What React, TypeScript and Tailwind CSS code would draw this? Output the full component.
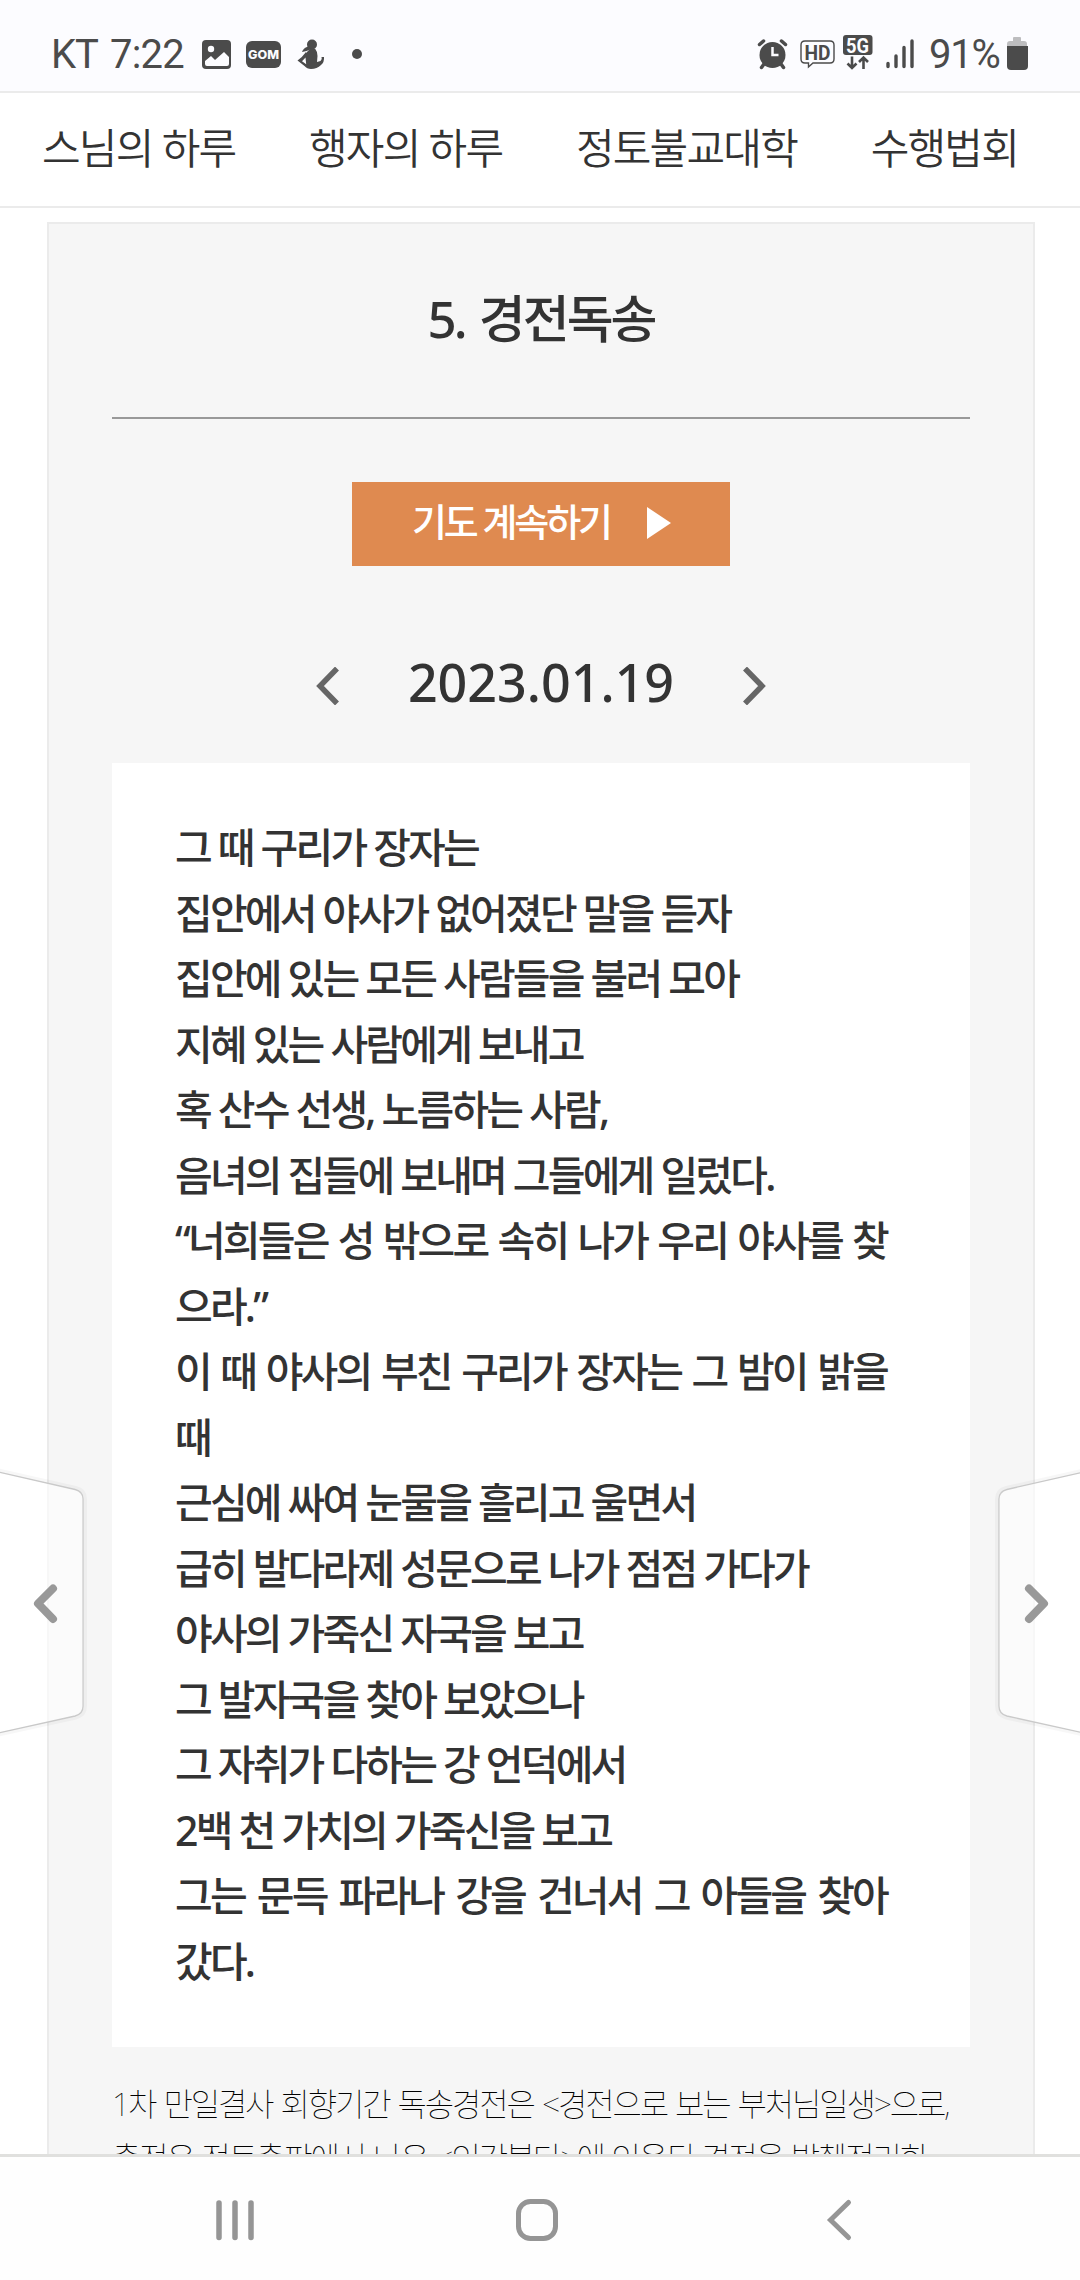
import React from 'react';

const menu = ['스님의 하루', '행자의 하루', '정토불교대학', '수행법회'];

const verses = [
  { text: '그 때 구리가 장자는' },
  { text: '집안에서 야사가 없어졌단 말을 듣자' },
  { text: '집안에 있는 모든 사람들을 불러 모아' },
  { text: '지혜 있는 사람에게 보내고' },
  { text: '혹 산수 선생, 노름하는 사람,' },
  { text: '음녀의 집들에 보내며 그들에게 일렀다.' },
  { text: '“너희들은 성 밖으로 속히 나가 우리 야사를 찾', wrapped: true },
  { text: '으라.”' },
  { text: '이 때 야사의 부친 구리가 장자는 그 밤이 밝을', wrapped: true },
  { text: '때' },
  { text: '근심에 싸여 눈물을 흘리고 울면서' },
  { text: '급히 발다라제 성문으로 나가 점점 가다가' },
  { text: '야사의 가죽신 자국을 보고' },
  { text: '그 발자국을 찾아 보았으나' },
  { text: '그 자취가 다하는 강 언덕에서' },
  { text: '2백 천 가치의 가죽신을 보고' },
  { text: '그는 문득 파라나 강을 건너서 그 아들을 찾아', wrapped: true },
  { text: '갔다.' },
];

const LeftIcons = () => (
  <svg className="h-[91px] w-[180px]" viewBox="195 0 180 91" fill="#4b4b4b">
    <rect x="202" y="40" width="29" height="29" rx="4" />
    <circle cx="211" cy="49" r="3.2" fill="#fcfcff" />
    <path d="M205 61l6-5 4 4 9-8 5 5v7q0 2-2 2h-20q-2 0-2-2z" fill="#fcfcff" />
    <rect x="246" y="41" width="35" height="27" rx="6" />
    <text x="263.500" y="59" textAnchor="middle" textLength="31" lengthAdjust="spacingAndGlyphs" fontSize="12" fontWeight="800" fill="#fcfcff" className="font-['Inter',sans-serif]">GOM</text>
    <circle cx="312" cy="44.500" r="5" />
    <path d="M309 46l1.500 3.500-4 1.500-4.500 1q1-4 7-6z" />
    <path d="M306 53l4-4 5-.5q2.500 3 2.500 7.500l-.5 6 3.500-1q2-1.500 1-4h2.500q.5 5-3 8-4 4-10 4-4 0-6.500-3l-7-5.500q5-3.500 8.500-8.500zM305.500 57.500l-3.500 3.800 4.200 3z" fillRule="evenodd" />
    <circle cx="357" cy="54" r="5" />
  </svg>
);

const RightIcons = () => (
  <svg className="h-[91px] w-[170px]" viewBox="755 0 170 91" fill="#4b4b4b">
    <circle cx="772.500" cy="55" r="13" />
    <path d="M759.500 44.500l4-3.500M785.500 44.500l-4-3.500M764 64l-2.500 3.500M781 64l2.500 3.500" stroke="#4b4b4b" strokeWidth="3.500" strokeLinecap="round" />
    <path d="M772.500 47v8h6" fill="none" stroke="#fcfcff" strokeWidth="2.500" />
    <path d="M805 41h25q4 0 4 4v14q0 4-4 4h-17l-4.500 4v-4h-3.500q-4 0-4-4v-14q0-4 4-4z" fill="none" stroke="#4b4b4b" strokeWidth="1.400" />
    <text x="817.500" y="59.500" textAnchor="middle" fontSize="21" fontWeight="700" textLength="26" lengthAdjust="spacingAndGlyphs" className="font-['Roboto',sans-serif]">HD</text>
    <rect x="843" y="35" width="29.500" height="20" rx="3" />
    <text x="857.500" y="52.500" textAnchor="middle" fontSize="21" fontWeight="700" fill="#fcfcff" textLength="23" lengthAdjust="spacingAndGlyphs" className="font-['Roboto',sans-serif]">5G</text>
    <path d="M852 56.500v11M847.500 63.500l4.500 4.500 4.500-4.500M863.500 69v-11.500M859 62l4.500-4.500 4.500 4.500" fill="none" stroke="#4b4b4b" strokeWidth="2.600" />
    <path d="M888 63.500v3M896 56v10.500M904 47.500v19M912 41v25.500" stroke="#4b4b4b" strokeWidth="3.400" strokeLinecap="round" />
  </svg>
);

const StatusBar = () => (
  <div className="flex h-[91px] w-full items-start bg-[#fcfcff] pl-[51px] font-['Roboto',sans-serif] text-[40px] leading-[48px] text-[#4b4b4b]">
    <span className="mt-[31px] w-[59px] whitespace-nowrap tracking-[-1px]">KT</span>
    <span className="mt-[31px] w-[85px] whitespace-nowrap tracking-[-0.800px]">7:22</span>
    <LeftIcons />
    <div className="grow" />
    <RightIcons />
    <span className="mt-[31px] ml-[4px] w-[76px] whitespace-nowrap tracking-[-1.200px]">91%</span>
    <svg className="mt-[37px] mr-[51px] h-[33px] w-[24px]" viewBox="0 0 24 33">
      <path d="M2 10V7q0-3 3-3h3V1q0-1 1-1h6q1 0 1 1v3h3q3 0 3 3v3z" fill="#bdbdbf" />
      <path d="M2 9h21v20q0 4-4 4H6q-4 0-4-4z" fill="#4b4b4b" />
    </svg>
  </div>
);

const SideTab = ({ flipped }: { flipped?: boolean }) => (
  <svg
    className={`absolute top-[1450px] h-[310px] w-[100px] ${flipped ? 'right-[-2px] -scale-x-100' : 'left-0'}`}
    viewBox="0 1450 100 310"
    fill="none"
  >
    <path
      d="M-4 1471.500L75 1489.500Q83 1491.500 83 1499V1706Q83 1714 75 1716L-4 1733.500Z"
      fill="#fff"
      fillOpacity="0.600"
      stroke="#cfcfcf"
      strokeWidth="1.300"
    />
    <path d="M-4 1470L76 1488Q85 1490 85 1499V1706Q85 1715 76 1717.500L-4 1735" stroke="#000" strokeOpacity="0.030" strokeWidth="4" />
    <path d="M53 1588.500L38 1603.500L53 1619" stroke="#999" strokeWidth="8" strokeLinecap="round" strokeLinejoin="round" />
  </svg>
);

const NavBar = () => (
  <div className="flex h-[126px] shrink-0 items-start border-t-[3px] border-[#e0e0de] bg-[#fefefe]">
    <svg className="h-[123px] w-full" viewBox="0 2157 1080 123" fill="none" stroke="#959595" strokeLinecap="round">
      <path d="M219 2203v34.500M235 2203v34.500M251 2203v34.500" strokeWidth="5.500" />
      <rect x="518.500" y="2201.500" width="37" height="37" rx="12" strokeWidth="5" />
      <path d="M848.500 2202.500L830.500 2220L848.500 2237.500" strokeWidth="5" />
    </svg>
  </div>
);

const App = () => {
  return (
    <div className="relative flex h-[2280px] w-[1080px] flex-col overflow-hidden bg-white font-['Noto_Sans','Noto_Sans_CJK_KR',sans-serif] text-[#333]">
      <StatusBar />

      <nav className="flex h-[117px] shrink-0 items-center justify-between border-y-2 border-[#ebebeb] pr-[62px] pb-[4px] pl-[42px] text-[42px] font-[350] tracking-[-1.800px]">
        {menu.map((item) => (
          <span key={item} className="whitespace-nowrap">{item}</span>
        ))}
      </nav>

      <main className="mt-[14px] mr-[45px] ml-[47px] flex min-h-0 grow flex-col overflow-hidden border-2 border-b-0 border-[#ebebeb] bg-[#f6f6f6] px-[63px]">
        <h1 className="flex h-[195px] shrink-0 items-center justify-center border-b-2 border-[#999] pb-[4px] text-[51px] font-medium tracking-[-3px] [word-spacing:4px]">
          5. 경전독송
        </h1>

        <button className="mt-[63px] flex h-[84px] w-[378px] shrink-0 items-center self-center bg-[#df8a50] pl-[60px] text-[38px] font-medium tracking-[-3.100px] text-white">
          <span className="w-[235px] pb-[6px] text-left">기도 계속하기</span>
          <svg className="mb-[2px] h-[32px] w-[24px]" viewBox="0 0 24 32" fill="#fff">
            <path d="M0 0L24 16L0 32Z" />
          </svg>
        </button>

        <div className="mt-[77px] flex h-[84px] shrink-0 items-center justify-center gap-[68px] text-[52px]">
          <svg className="mt-[2px] h-[38px] w-[24px]" viewBox="0 0 24 38" fill="none" stroke="#666" strokeWidth="5.500">
            <path d="M21 1.500L4 19L21 36.500" />
          </svg>
          <span className="pb-[6px] font-medium">2023.01.19</span>
          <svg className="mt-[2px] h-[38px] w-[24px]" viewBox="0 0 24 38" fill="none" stroke="#666" strokeWidth="5.500">
            <path d="M3 1.500L20 19L3 36.500" />
          </svg>
        </div>

        <div className="mt-[36px] h-[1284px] shrink-0 bg-white px-[63px] py-[52px] text-[41px] leading-[65.500px] font-medium tracking-[-2.800px]">
          {verses.map((verse) => (
            <p
              key={verse.text}
              className={verse.wrapped ? 'w-[712px] whitespace-nowrap [text-align-last:justify]' : 'whitespace-nowrap'}
            >
              {verse.text}
            </p>
          ))}
        </div>

        <div className="mt-[30px] text-[32px] leading-[54px] font-thin tracking-[-2.200px] text-black">
          <p className="w-[836px] whitespace-nowrap [text-align-last:justify]">1차 만일결사 회향기간 독송경전은 &lt;경전으로 보는 부처님일생&gt;으로,</p>
          <p className="w-[815px] whitespace-nowrap [text-align-last:justify]">출전은 정토출판에서 나온 &lt;인간붓다&gt;에 인용된 경전을 발췌정리한</p>
        </div>
      </main>

      <NavBar />
      <SideTab />
      <SideTab flipped />
    </div>
  );
};

export default App;
